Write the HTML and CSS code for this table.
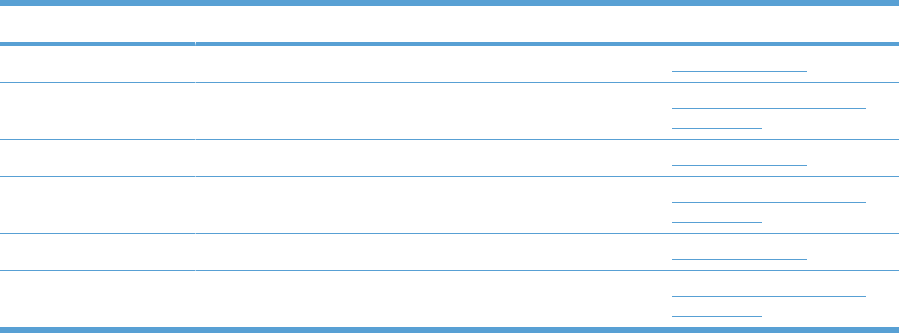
FILE: index.html
```html
<!DOCTYPE html>
<html lang="en">

<head>
    <meta charset="UTF-8">
    <meta name="viewport" content="width=device-width, initial-scale=1.0">
    <title>Links</title>
    <link rel="stylesheet" href="styles.css">
</head>

<body>
    <div class="table">
        <div class="row head">
            <div class="cell first"></div>
            <div class="cell"></div>
            <div class="cell"></div>
        </div>
        <div class="row">
            <div class="cell first"></div>
            <div class="cell"></div>
            <div class="cell links"><a href="#" class="link short"></a></div>
        </div>
        <div class="row">
            <div class="cell first"></div>
            <div class="cell"></div>
            <div class="cell links"><a href="#" class="link long"></a><a href="#" class="link tail"></a></div>
        </div>
        <div class="row">
            <div class="cell first"></div>
            <div class="cell"></div>
            <div class="cell links"><a href="#" class="link short"></a></div>
        </div>
        <div class="row">
            <div class="cell first"></div>
            <div class="cell"></div>
            <div class="cell links"><a href="#" class="link long"></a><a href="#" class="link tail"></a></div>
        </div>
        <div class="row">
            <div class="cell first"></div>
            <div class="cell"></div>
            <div class="cell links"><a href="#" class="link short"></a></div>
        </div>
        <div class="row last">
            <div class="cell first"></div>
            <div class="cell"></div>
            <div class="cell links"><a href="#" class="link long"></a><a href="#" class="link tail"></a></div>
        </div>
    </div>
</body>

</html>
```

FILE: styles.css
```css
body {
    margin: 0;
    font-family: "Liberation Sans", Arial, sans-serif;
    background: #fff;
}

.table {
    width: 899px;
    border-top: 6px solid #58a0d4;
}

.row {
    display: grid;
    grid-template-columns: 196px 476px 1fr;
}

.cell {
    min-height: 36px;
    border-bottom: 1px solid #58a0d4;
}

.cell.first {
    border-right: 1px solid transparent;
}

.head .cell {
    border-bottom-width: 4px;
}

.last .cell {
    border-bottom: 6px solid #58a0d4;
}

.last .cell.first {
    border-right: 0;
}

.links {
    padding: 6px 0 10px;
    min-height: 0;
}

.link {
    display: block;
    height: 19px;
    border-bottom: 1px solid #58a0d4;
}

.short {
    width: 135px;
}

.long {
    width: 194px;
}

.tail {
    width: 90px;
}
```
